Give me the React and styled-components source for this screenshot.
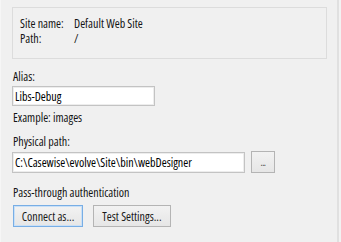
import React from 'react'
import styled, { createGlobalStyle } from 'styled-components'

const Global = createGlobalStyle`
  html, body {
    margin: 0;
    background: #f2f2f2;
  }
  body {
    font-family: "Open Sans", "Noto Sans", sans-serif;
    font-stretch: 75%;
    font-size: 12px;
    color: #141414;
  }
`

const Panel = styled.div`
  width: 339px;
  height: 242px;
  box-sizing: border-box;
  padding: 7px 0 0 11px;
  background: #f0f0f0;
  border-right: 2px solid #e0e0e0;
  border-left: 1px solid #f6f6f6;
  display: flex;
  flex-direction: column;
  align-items: flex-start;
`

const InfoBox = styled.div`
  width: 315px;
  height: 52px;
  box-sizing: border-box;
  border: 1px solid #dcdcdc;
  padding: 8px 0 0 7px;
  display: grid;
  grid-template-columns: 54px 1fr;
  grid-auto-rows: 15px;
  line-height: 15px;
`

const Label = styled.div`
  line-height: 15px;
  padding-left: 1px;
  margin-top: ${props => props.top || 0}px;
`

const TextBox = styled.div`
  width: ${props => props.width}px;
  height: ${props => props.height}px;
  box-sizing: border-box;
  margin-top: ${props => props.top || 0}px;
  background: #fff;
  border: 1px solid #c3c3c3;
  box-shadow: inset 0 0 0 1px #ededed;
  padding-left: 2px;
  display: flex;
  align-items: center;
  white-space: nowrap;
  overflow: hidden;
  color: #000;
`

const PathRow = styled.div`
  display: flex;
  align-items: center;
  gap: 6px;
  margin-top: 2px;
`

const Button = styled.div`
  height: 22px;
  width: ${props => props.width}px;
  box-sizing: border-box;
  border: 1px solid ${props => props.focused ? '#78aee5' : '#b4b4b4'};
  box-shadow: ${props => props.focused ? 'inset 0 0 0 1px #c9e0f7' : 'none'};
  background: linear-gradient(#f2f2f2, #e6e6e6);
  display: flex;
  align-items: center;
  justify-content: center;
  color: #1a1a1a;
  white-space: nowrap;
`

const Dots = styled(Button)`
  font-size: 10px;
  letter-spacing: -0.5px;
  color: #444;
`

const ButtonRow = styled.div`
  display: flex;
  gap: 10px;
  margin-top: 5px;
  padding-left: 1px;
`

const App = () => (
  <>
    <Global />
    <Panel>
      <InfoBox>
        <div>Site name:</div>
        <div>Default Web Site</div>
        <div>Path:</div>
        <div>/</div>
      </InfoBox>

      <Label top={10}>Alias:</Label>
      <TextBox width={143} height={20} top={2}>Libs-Debug</TextBox>
      <Label top={4}>Example: images</Label>

      <Label top={9}>Physical path:</Label>
      <PathRow>
        <TextBox width={233} height={21}>C:\Casewise\evolve\Site\bin\webDesigner</TextBox>
        <Dots width={24}>...</Dots>
      </PathRow>

      <Label top={12}>Pass-through authentication</Label>
      <ButtonRow>
        <Button width={70} focused>Connect as...</Button>
        <Button width={78}>Test Settings...</Button>
      </ButtonRow>
    </Panel>
  </>
)

export default App
